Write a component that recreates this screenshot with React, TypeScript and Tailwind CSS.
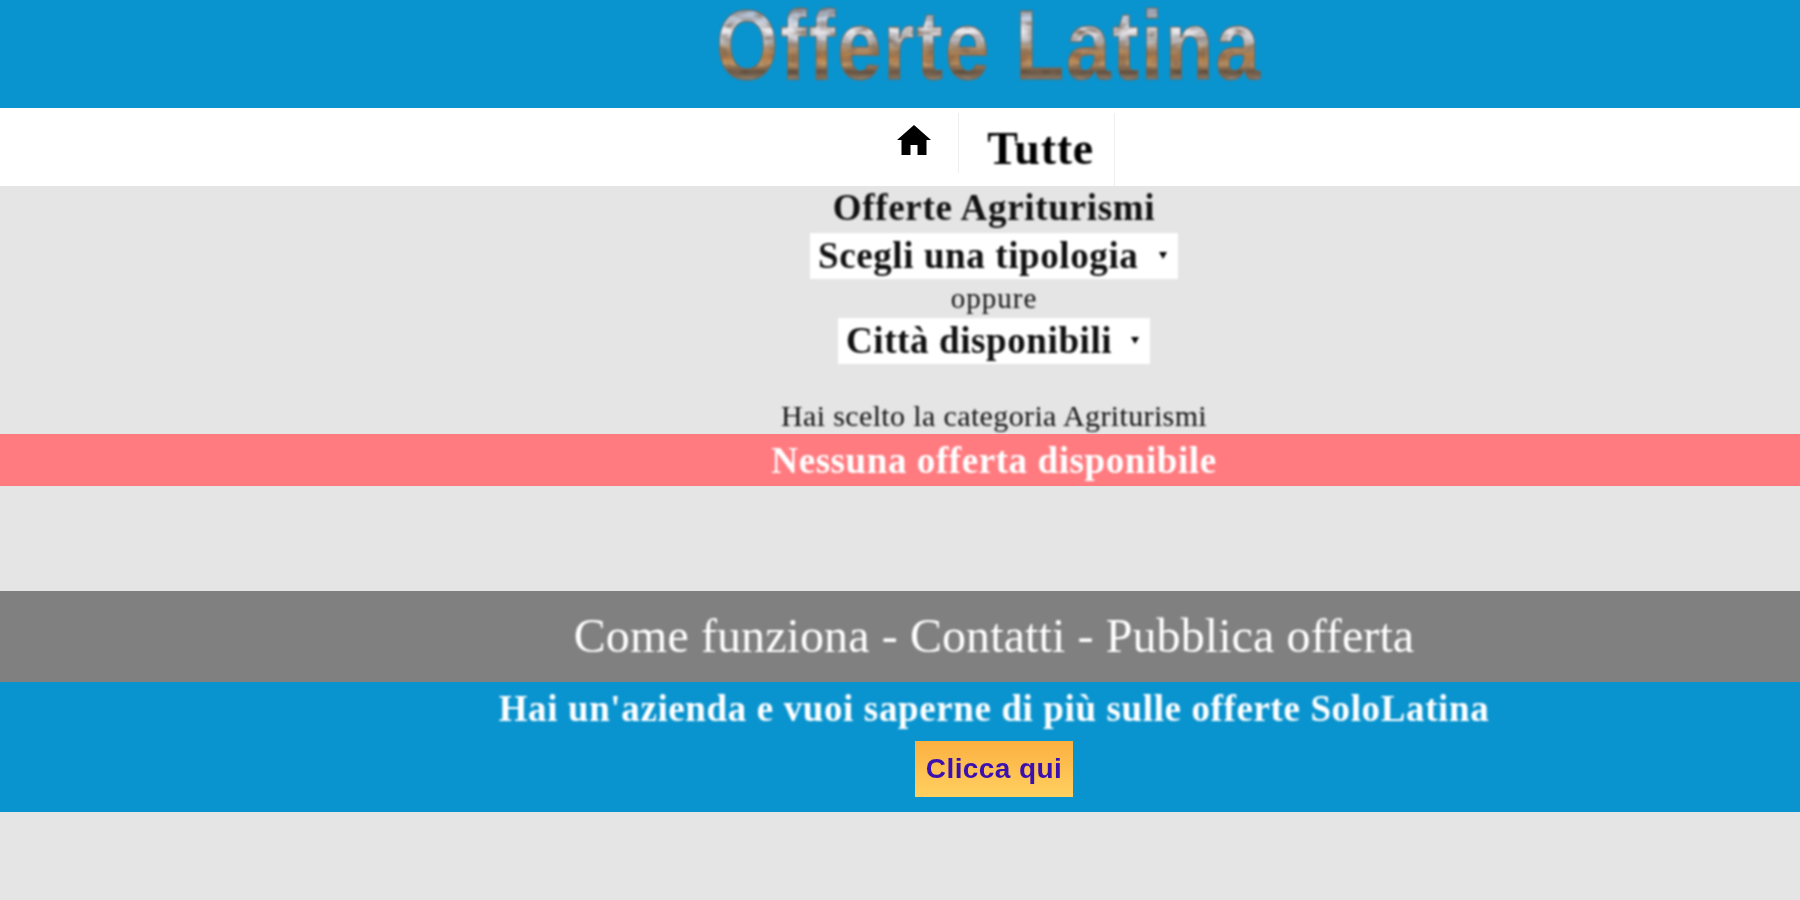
const serif = "font-['Liberation_Serif','Times_New_Roman',serif]";

function Caret() {
  return <span className="absolute right-[11px] top-[19px] h-0 w-0 border-x-[4px] border-t-[7px] border-x-transparent border-t-black" />;
}

function Logo() {
  return (
    <svg width="548" height="108" viewBox="0 0 548 108" className="blur-[0.8px]">
      <defs>
        <linearGradient id="sky" gradientUnits="userSpaceOnUse" x1="0" y1="-60" x2="0" y2="0">
          <stop offset="0" stopColor="#93a3bb" />
          <stop offset="0.18" stopColor="#c3cede" />
          <stop offset="0.34" stopColor="#eceaee" />
          <stop offset="0.48" stopColor="#bfc0c6" />
          <stop offset="0.58" stopColor="#ad8f70" />
          <stop offset="0.7" stopColor="#b07a45" />
          <stop offset="0.8" stopColor="#c49868" />
          <stop offset="0.9" stopColor="#5a4a3c" />
          <stop offset="1" stopColor="#94836f" />
        </linearGradient>
        <filter id="photo" x="0" y="0" width="100%" height="100%">
          <feTurbulence type="fractalNoise" baseFrequency="0.07 0.14" numOctaves="2" seed="4" />
          <feColorMatrix values="0 0 0 0 0.2  0 0 0 0 0.13  0 0 0 0 0.08  1.8 0 0 0 -0.6" />
          <feComposite in2="SourceAlpha" operator="in" result="grain" />
          <feMerge>
            <feMergeNode in="SourceGraphic" />
            <feMergeNode in="grain" />
          </feMerge>
        </filter>
      </defs>
      <g filter="url(#photo)">
        <text
          transform="translate(2 79) scale(1 1.22)"
          textLength="544"
          fontFamily="'Liberation Sans', Arial, sans-serif"
          fontSize="80"
          fontWeight="700"
          fill="url(#sky)"
          stroke="#6f675e"
          strokeWidth="0.8"
        >
          Offerte Latina
        </text>
      </g>
    </svg>
  );
}

export default function App() {
  return (
    <div className={`${serif} min-h-[900px] bg-[#e5e5e5] text-center text-[#111]`}>
      <header className="flex h-[108px] justify-center bg-[#0a94cf] pl-[176px]">
        <Logo />
      </header>

      <nav className="flex h-[78px] justify-center bg-white pl-[212px]">
        <div className="mt-[5px] flex h-[60px] w-[62px] items-center border-r border-[#eee]">
          <svg viewBox="0 0 34 30" className="mt-[-6px] h-[30px] w-[34px] blur-[0.6px]" fill="#000">
            <path d="M17 0 L34 15 L29.5 15 L29.5 30 L20.5 30 L20.5 20 L13.5 20 L13.5 30 L4.5 30 L4.5 15 L0 15 Z" />
          </svg>
        </div>
        <div className="mt-[5px] h-[73px] border-r border-[#eee] pl-[28px] pr-[20px] pt-[8px] text-[46px] leading-[56px] font-bold tracking-[0.7px] text-black">
          <span className="inline-block blur-[0.8px]">Tutte</span>
        </div>
      </nav>

      <main className="flex h-[248px] flex-col items-center pl-[188px]">
        <h2 className="h-[47px] text-[37px] leading-[44px] font-bold tracking-[0.7px] blur-[0.9px]">Offerte Agriturismi</h2>
        <div className="relative h-[46px] w-[368px] bg-white pl-[8px] text-left text-[37px] leading-[46px] font-bold tracking-[0.6px] blur-[0.9px]">
          Scegli una tipologia
          <Caret />
        </div>
        <p className="mt-[2px] h-[35px] text-[29px] leading-[34px] tracking-[1px] blur-[0.9px]">oppure</p>
        <div className="relative mt-[2px] h-[46px] w-[312px] bg-white pl-[8px] text-left text-[37px] leading-[46px] font-bold tracking-[0.6px] blur-[0.9px]">
          Città disponibili
          <Caret />
        </div>
        <p className="mt-[35px] text-[30px] leading-[34px] tracking-[0.37px] blur-[0.9px]">Hai scelto la categoria Agriturismi</p>
      </main>

      <div className="h-[52px] bg-[#ff7b80] pl-[188px] text-[37px] leading-[54px] font-bold tracking-[0.58px] text-white">
        <span className="inline-block blur-[0.9px]">Nessuna offerta disponibile</span>
      </div>

      <div className="h-[105px]" />

      <div className="h-[91px] bg-[#808080] pl-[188px] text-[48px] leading-[90px] tracking-[0.1px] text-white">
        <span className="inline-block blur-[0.9px]">Come funziona - Contatti - Pubblica offerta</span>
      </div>

      <section className="flex h-[130px] flex-col items-center bg-[#0a94cf] pl-[188px] pt-[4px]">
        <p className="text-[37px] leading-[46px] font-bold tracking-[0.62px] text-white blur-[0.9px]">Hai un'azienda e vuoi saperne di più sulle offerte SoloLatina</p>
        <a className="mt-[9px] flex h-[56px] w-[158px] items-center justify-center bg-gradient-to-b from-[#fbb040] to-[#ffd060] font-['Liberation_Sans',Arial,sans-serif] text-[28px] font-bold tracking-[0.4px] text-[#3a10b0] blur-[0.7px]">
          Clicca qui
        </a>
      </section>
    </div>
  );
}
